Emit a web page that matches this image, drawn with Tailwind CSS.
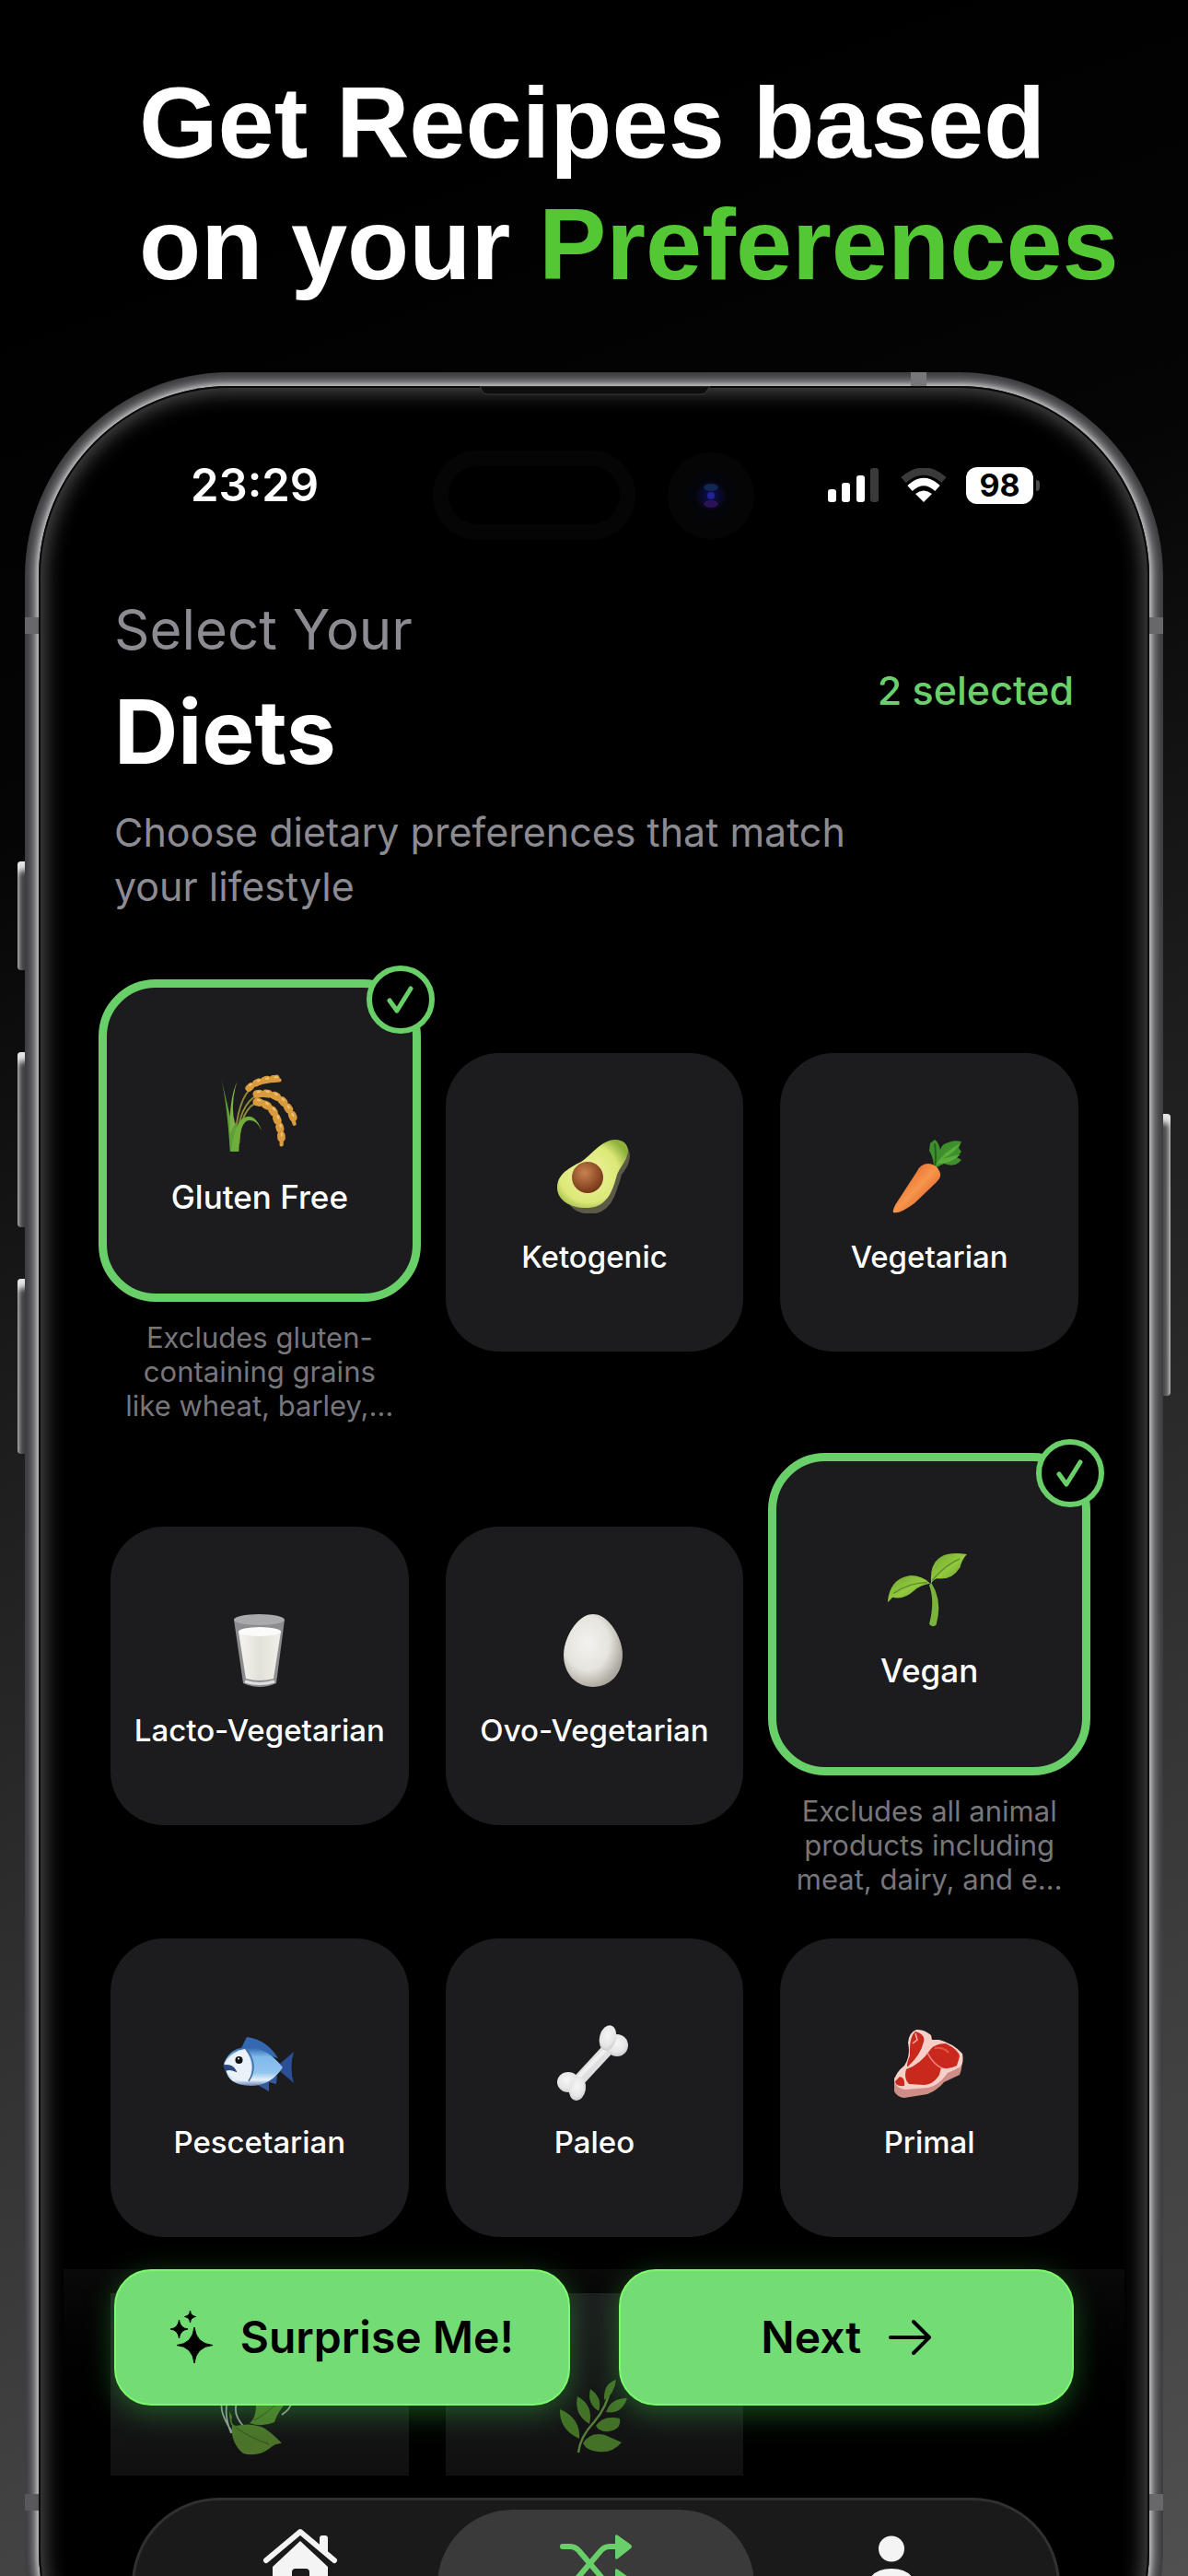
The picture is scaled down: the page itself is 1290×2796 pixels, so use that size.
<!DOCTYPE html>
<html lang="en">
<head>
<meta charset="utf-8">
<meta name="viewport" content="width=device-width, initial-scale=1">
<title>Recipe preferences</title>
<script src="https://cdn.jsdelivr.net/npm/@tailwindcss/browser@4"></script>
</head>
<body class="bg-black">
<div class="h-screen overflow-hidden bg-[linear-gradient(160deg,#000_10%,#050505_28%,#1b1b1b_46%,#2b2b2b_62%,#3e3e3e_80%,#505050_100%)] font-['Inter',sans-serif] text-white">

  <h1 class="pt-[67px] pl-[151px] font-['Liberation_Sans',sans-serif] text-[110px] leading-[132px] font-bold whitespace-nowrap">Get Recipes based<br>on your <span class="text-[#53c834]">Preferences</span></h1>

  <!-- phone -->
  <div class="relative mx-[27px] mt-[73px] h-[2586px]">
    <div class="absolute top-[531px] -left-2 h-[118px] w-2 rounded-l-sm bg-linear-to-r from-[#a0a0a0] via-[#58585a] to-[#303032] shadow-[inset_0_14px_6px_-4px_#e4e4e4]"></div>
    <div class="absolute top-[738px] -left-2 h-[190px] w-2 rounded-l-sm bg-linear-to-r from-[#a0a0a0] via-[#58585a] to-[#303032] shadow-[inset_0_14px_6px_-4px_#e4e4e4]"></div>
    <div class="absolute top-[984px] -left-2 h-[190px] w-2 rounded-l-sm bg-linear-to-r from-[#a0a0a0] via-[#58585a] to-[#303032] shadow-[inset_0_14px_6px_-4px_#e4e4e4]"></div>
    <div class="absolute top-[805px] -right-2 h-[306px] w-2 rounded-r-sm bg-linear-to-l from-[#b0b0b0] via-[#68686a] to-[#3a3a3c] shadow-[inset_0_14px_6px_-4px_#e4e4e4]"></div>

    <div class="relative h-full overflow-hidden rounded-[222px] bg-[#3c3c3f] p-[15px]">
      <div class="relative h-full rounded-[207px] bg-black shadow-[0_0_4px_2px_#c0c0c3,0_0_8px_7px_#88888b,inset_0_0_0_2px_#0a0a0a,inset_0_0_22px_6px_#505050]">
        <svg class="absolute top-0 left-1/2 -ml-[124px] h-2.5 w-[250px]" viewBox="0 0 250 10" aria-hidden="true"><path d="M0 0h250l-4 6q-1 3-5 3H8q-4 0-5-3z" fill="#0e0e0e" stroke="#3a3a3a"/></svg>

        <!-- sensor island -->
        <div class="absolute top-[70px] left-[428px] h-[97px] w-[220px] rounded-full border-[17px] border-[#050505]" aria-hidden="true"></div>
        <svg class="absolute top-[72px] left-[683px] size-[94px]" viewBox="0 0 94 94" aria-hidden="true">
          <defs><radialGradient id="lens" cx=".5" cy=".5" r=".5"><stop offset="0" stop-color="#12124c"/><stop offset=".5" stop-color="#0a0a38"/><stop offset="1" stop-color="#06060f"/></radialGradient></defs>
          <circle cx="47" cy="47" r="47" fill="#050505"/><circle cx="47" cy="47" r="26" fill="#04050a"/><circle cx="47" cy="47" r="16" fill="url(#lens)"/>
          <ellipse cx="47" cy="38" rx="8" ry="4" fill="#173462" opacity=".7"/><ellipse cx="47" cy="56" rx="8" ry="4" fill="#3a1668" opacity=".7"/><circle cx="47" cy="47" r="4" fill="#22229a"/>
        </svg>

        <!-- status bar -->
        <div class="flex items-center justify-between pt-20 pr-[119px] pl-[165px]">
          <div class="text-[49px] leading-[56px] font-semibold">23:29</div>
          <div class="flex items-center">
            <svg class="h-[38px] w-14" viewBox="0 0 56 38" role="img" aria-label="Signal"><g fill="#fff"><rect y="23" width="9" height="14" rx="3"/><rect x="15" y="16" width="9" height="21" rx="3"/><rect x="31" y="8" width="9" height="29" rx="3"/></g><rect x="46" width="9" height="37" rx="3" fill="#3a3a3a"/></svg>
            <svg class="ml-[23px] h-[38px] w-[50px]" viewBox="0 0 50 38" role="img" aria-label="Wi-Fi"><path d="M3 13Q25-6 47 13" fill="none" stroke="#3a3a3a" stroke-width="8"/><path d="M10 22Q25 8 40 22" fill="none" stroke="#fff" stroke-width="8"/><path d="M16 28Q25 21 34 28L25 37Z" fill="#fff"/></svg>
            <div class="ml-[21px] flex h-10 w-[73px] items-center justify-center rounded-xl bg-white text-[34px] leading-10 font-bold text-black">98</div>
            <div class="ml-[3px] h-3 w-1 rounded-r-full bg-[#4a4a4a]"></div>
          </div>
        </div>

        <!-- heading -->
        <header class="px-[82px] pt-[92px]">
          <div class="flex items-center justify-between">
            <h2><span class="block text-[60px] leading-[72px] font-normal text-[#8c8b91]">Select Your</span><span class="mt-[19px] block text-[96px] leading-[112px] font-bold">Diets</span></h2>
            <p class="text-[43px] leading-[52px] font-medium text-[#6bcf6b]">2 selected</p>
          </div>
          <p class="mt-6 max-w-[830px] text-[43px] leading-[59px] text-[#8c8b91]">Choose dietary preferences that match your lifestyle</p>
        </header>

        <!-- diet cards -->
        <main class="mt-[84px] grid grid-cols-3 items-center gap-x-10 gap-y-14 pr-[77px] pl-[78px]">
          <div>
            <button aria-pressed="true" class="relative -m-[13px] flex h-[350px] w-[calc(100%+26px)] flex-col items-center rounded-[62px] border-[9px] border-[#69cf69] bg-[#1c1c1e] pt-[94px]">
              <svg class="size-[86px]" viewBox="0 0 80 80" aria-hidden="true">
                <g fill="none" stroke="#8f8a3a" stroke-width="1.8"><path d="M15 66Q18 24 32 14M17 68Q19 30 38 21M19 70Q20 34 40 27"/></g>
                <path d="M.6 3Q7 28 10 78H18Q23 55 10 42Q5 20 .6 3" fill="#5f9f38"/><path d="M17 8Q9 24 10 60L15 50Q10 30 17 8" fill="#7fb04a"/><path d="M11 78H19Q19 52 27 47Q36 44 42 57Q36 40 26 43Q17 46 13 66" fill="#6fae3c"/>
                <g fill="none" stroke="#d99b3c" stroke-linecap="round"><path d="M29 14Q38 5 58 4" stroke-width="7" stroke-dasharray="3 6"/><path d="M30 13Q40 7 60 6" stroke-width="4"/><path d="M37 20Q54 17 64 28Q72 37 75 47" stroke-width="8" stroke-dasharray="3 6"/><path d="M36 22Q54 18 63 29Q72 38 75 50" stroke-width="4"/><path d="M37 28Q52 30 57 44Q62 56 62 67" stroke-width="8" stroke-dasharray="3 6"/><path d="M37 26Q53 30 58 44Q63 56 62 71" stroke-width="4"/></g>
                <g fill="none" stroke="#efc274" stroke-linecap="round" stroke-width="2" stroke-dasharray="2 7"><path d="M30 11Q40 4 58 3"/><path d="M38 18Q54 15 64 26Q72 36 75 45"/><path d="M38 26Q54 30 58 42Q63 54 62 65"/></g>
              </svg>
              <span class="mt-[26px] text-[35px] leading-[42px] font-medium">Gluten Free</span>
              <span class="absolute -top-6 -right-6 flex size-[74px] items-center justify-center rounded-full border-[6px] border-[#69cf69] bg-black"><svg class="size-8" viewBox="0 0 32 32" aria-hidden="true"><path d="M4 17l8 11L27 4" fill="none" stroke="#69cf69" stroke-width="5" stroke-linecap="round" stroke-linejoin="round"/></svg></span>
            </button>
            <p class="mt-[33px] -mb-2.5 text-center text-[31px] leading-[37px] text-[#77767b]">Excludes gluten-<br>containing grains<br>like wheat, barley,…</p>
          </div>

          <button aria-pressed="false" class="flex h-[324px] flex-col items-center rounded-[58px] bg-[#1c1c1e] pt-[94px]">
            <svg class="size-20" viewBox="0 0 80 80" aria-hidden="true">
              <defs><radialGradient id="avo" cx=".45" cy=".5" r=".6"><stop offset="0" stop-color="#f0f3a0"/><stop offset=".7" stop-color="#dce878"/><stop offset="1" stop-color="#8fb13c"/></radialGradient><radialGradient id="pit" cx=".4" cy=".35" r=".7"><stop offset="0" stop-color="#c98250"/><stop offset="1" stop-color="#703213"/></radialGradient></defs>
              <path d="M64 2Q78 4 79 17Q79 27 70 38Q68 46 62 62Q54 80 36 81Q18 80 12 68z" fill="#5b5a48"/><path d="M63 0C74 0 79 8 76 17C74 25 68 30 65 38C61 52 56 73 34 74C15 75 0 66 0 52C0 38 12 31 26 24C36 18 48 0 63 0z" fill="url(#avo)"/><ellipse cx="33" cy="41" rx="17" ry="17" fill="url(#pit)"/>
            </svg>
            <span class="mt-[27px] text-[33px] leading-10 font-medium">Ketogenic</span>
          </button>

          <button aria-pressed="false" class="flex h-[324px] flex-col items-center rounded-[58px] bg-[#1c1c1e] pt-[94px]">
            <svg class="size-20" viewBox="0 0 80 80" aria-hidden="true">
              <defs><linearGradient id="car" x1="0" y1="0" x2="1" y2="1"><stop offset=".2" stop-color="#e2652c"/><stop offset=".5" stop-color="#f8964c"/><stop offset=".8" stop-color="#dd622b"/></linearGradient></defs>
              <path d="M45 28L48 30L56 26Q66 30 72 25L75 22L70 19L75 13L72 9L75 2Q66 0 61 3Q54 4 52 11Q50 2 46 0L41 4L40 12Q44 18 45 28z" fill="#3f8f2f"/><path d="M47 28Q54 14 74 4Q68 14 54 21Q64 18 74 16Q64 26 50 26z" fill="#59ad38"/><path d="M46 29Q48 20 46 4" stroke="#28601f" stroke-width="2" fill="none"/>
              <path d="M1 79Q0 77 3 71L27 34Q31 26 39 26Q50 27 52 37Q53 41 48 46L24 69Q8 81 1 79z" fill="url(#car)"/>
            </svg>
            <span class="mt-[27px] text-[33px] leading-10 font-medium">Vegetarian</span>
          </button>

          <button aria-pressed="false" class="flex h-[324px] flex-col items-center rounded-[58px] bg-[#1c1c1e] pt-[94px]">
            <svg class="size-20" viewBox="0 0 80 80" aria-hidden="true">
              <defs><linearGradient id="milk"><stop offset="0" stop-color="#f5f5f0"/><stop offset=".5" stop-color="#e2e1d9"/><stop offset="1" stop-color="#f0f0ea"/></linearGradient></defs>
              <path d="M12 7L22 76Q40 84 58 76L67 7z" fill="#8d8d90"/><ellipse cx="39.500" cy="7" rx="27.500" ry="6" fill="#aaaaac"/><path d="M17 20L25 71Q40 75 55 71L63 20z" fill="url(#milk)"/><ellipse cx="40" cy="20" rx="23" ry="5" fill="#fbfbf9"/><path d="M24 74Q40 79 56 74" stroke="#dedee0" stroke-width="3" fill="none"/>
            </svg>
            <span class="mt-[27px] text-[33px] leading-10 font-medium whitespace-nowrap">Lacto-Vegetarian</span>
          </button>

          <button aria-pressed="false" class="flex h-[324px] flex-col items-center rounded-[58px] bg-[#1c1c1e] pt-[94px]">
            <svg class="size-20" viewBox="0 0 80 80" aria-hidden="true">
              <defs><radialGradient id="egg" cx=".4" cy=".4" r=".62"><stop offset="0" stop-color="#f3f2ee"/><stop offset=".6" stop-color="#e6e4de"/><stop offset="1" stop-color="#aca89f"/></radialGradient></defs>
              <path d="M39 1C56 1 71 27 71 45C71 66 57 80 39 80S7 66 7 45C7 27 22 1 39 1z" fill="url(#egg)"/>
            </svg>
            <span class="mt-[27px] text-[33px] leading-10 font-medium whitespace-nowrap">Ovo-Vegetarian</span>
          </button>

          <div>
            <button aria-pressed="true" class="relative -m-[13px] flex h-[350px] w-[calc(100%+26px)] flex-col items-center rounded-[62px] border-[9px] border-[#69cf69] bg-[#1c1c1e] pt-[94px]">
              <svg class="size-[86px] overflow-visible" viewBox="0 0 80 80" aria-hidden="true">
                <defs><linearGradient id="leafa" x1="0" y1="0" x2="1" y2="1"><stop offset="0" stop-color="#6ea52d"/><stop offset=".5" stop-color="#93c83f"/><stop offset="1" stop-color="#5c9426"/></linearGradient></defs>
                <path d="M42 35Q54 54 47 78Q43 81 40 77Q46 54 40 38z" fill="#7cb33a"/><path d="M42 36Q40 16 52 9Q60 4 78 6.500Q73 12 71 20Q63 33 48 31Q44 32 42 36z" fill="url(#leafa)"/><path d="M41 36Q30 38 25 43Q14 53 3 50L-2 55Q0 31 21 28Q33 28 41 36z" fill="url(#leafa)"/>
                <path d="M43 33Q55 18 71 11M38 35Q20 35 4 46" fill="none" stroke="#5a8e28" stroke-width="1.300"/>
              </svg>
              <span class="mt-[26px] text-[35px] leading-[42px] font-medium">Vegan</span>
              <span class="absolute -top-6 -right-6 flex size-[74px] items-center justify-center rounded-full border-[6px] border-[#69cf69] bg-black"><svg class="size-8" viewBox="0 0 32 32" aria-hidden="true"><path d="M4 17l8 11L27 4" fill="none" stroke="#69cf69" stroke-width="5" stroke-linecap="round" stroke-linejoin="round"/></svg></span>
            </button>
            <p class="mt-[33px] -mb-2.5 text-center text-[31px] leading-[37px] text-[#77767b]">Excludes all animal<br>products including<br>meat, dairy, and e…</p>
          </div>

          <button aria-pressed="false" class="flex h-[324px] flex-col items-center rounded-[58px] bg-[#1c1c1e] pt-[94px]">
            <svg class="size-20" viewBox="0 0 80 80" aria-hidden="true">
              <defs><linearGradient id="fish" x2="0" y2="1"><stop offset="0" stop-color="#2f63ad"/><stop offset=".25" stop-color="#7fb9ea"/><stop offset=".65" stop-color="#8fc4ee"/><stop offset=".85" stop-color="#e6f0f8"/><stop offset="1" stop-color="#5f80b4"/></linearGradient></defs>
              <path d="M20 25L26 13Q48 16 60 36z" fill="#3468b0"/><path d="M62 42L77 29Q72 46 77 63L62 50z" fill="#2b4f95"/><path d="M36 64L50 72L50 62L58 64L59 55z" fill="#35599d"/>
              <path d="M1 42Q8 24 26 24Q48 24 65 46Q52 66 30 66Q8 65 4 52z" fill="url(#fish)"/><path d="M2 41Q10 28 24 26Q36 42 28 61Q11 62 4 51z" fill="#eaf1f8"/><path d="M26 27Q39 44 28 61" fill="none" stroke="#47699e" stroke-width="1.500"/><ellipse cx="17.500" cy="38" rx="4" ry="4" fill="#111"/><circle cx="17" cy="36.500" r="1" fill="#fff"/><path d="M1 44Q11 43 14 50Q8 47 3 49z" fill="#2b4680" stroke="#2b4680" stroke-width="1.500"/>
            </svg>
            <span class="mt-[27px] text-[33px] leading-10 font-medium">Pescetarian</span>
          </button>

          <button aria-pressed="false" class="flex h-[324px] flex-col items-center rounded-[58px] bg-[#1c1c1e] pt-[94px]">
            <svg class="size-20 overflow-visible" viewBox="0 0 80 80" aria-hidden="true">
              <defs><radialGradient id="bone" cx=".45" cy=".4" r=".6"><stop offset="0" stop-color="#f6f6f6"/><stop offset=".7" stop-color="#e6e6e6"/><stop offset="1" stop-color="#cfcfcf"/></radialGradient></defs>
              <path d="M57 24L19 65" stroke="#e0e0e0" stroke-width="13"/><path d="M55 24L17 63" stroke="#f0f0f0" stroke-width="4"/>
              <ellipse cx="65" cy="22" rx="12" ry="12" fill="url(#bone)"/><ellipse cx="55" cy="14" rx="9" ry="14" transform="rotate(14 55 14)" fill="url(#bone)"/><ellipse cx="12" cy="62" rx="12" ry="11" fill="url(#bone)"/><ellipse cx="22" cy="69" rx="9" ry="13" transform="rotate(10 22 69)" fill="url(#bone)"/>
            </svg>
            <span class="mt-[27px] text-[33px] leading-10 font-medium">Paleo</span>
          </button>

          <button aria-pressed="false" class="flex h-[324px] flex-col items-center rounded-[58px] bg-[#1c1c1e] pt-[94px]">
            <svg class="size-20" viewBox="0 0 80 80" aria-hidden="true">
              <path d="M2 57V72Q6 79 13 79L38 75Q50 70 56 62L73 54Q76 48 76 32z" fill="#cf8d88"/>
              <path d="M26 5Q34 4 42 11L43 16L51 16Q66 20 76 31Q78 42 73 46L60 52Q50 66 39 68L14 70Q3 68 2 60Q4 51 13 44Q20 34 17 19Q18 8 26 5z" fill="#f6cfc9"/>
              <path d="M25 7Q36 10 34 18Q31 32 17 45Q14 46 19 33Q18 12 25 7zM41 27Q46 20 58 20Q72 27 73 34L70 44Q60 49 53 46L51 54Q45 64 35 65L18 64Q12 58 15 48Q30 43 41 27zM8 56Q14 57 13 66Q3 67 3 61z" fill="#c9281d"/>
              <path d="M38 30Q44 42 54 47" stroke="#e88" stroke-width="1.500" fill="none"/><path d="M46 25Q56 24 61 30" stroke="#e3564a" stroke-width="2" fill="none"/><path d="M25 9l2 7l-5 4" stroke="#f3b3ac" stroke-width="1.500" fill="none"/>
            </svg>
            <span class="mt-[27px] text-[33px] leading-10 font-medium">Primal</span>
          </button>
        </main>

        <!-- next row, running under the action bar -->
        <div class="relative mt-[35px]">
          <div class="mx-[27px] bg-linear-to-b from-[#0a0a0a] to-black pt-[26px] pr-[50px] pl-[51px]">
            <div class="grid grid-cols-3 gap-x-10">
              <div class="flex h-[198px] justify-center overflow-hidden bg-linear-to-b from-[#1d1f20] to-[#101011] pt-[94px]">
                <svg class="size-20 overflow-visible opacity-80" viewBox="0 0 80 80" aria-hidden="true"><path d="M11 58Q-8 30 2 20M9 58Q0 36 6 20M22 50Q8 34 18 20M64 38Q76 30 74 22" fill="none" stroke="#b5bdc2" stroke-width="1.800"/><path d="M29 47Q36 42 36 28Q50 20 68 26Q60 34 56 46Q42 52 29 47z" fill="#5c9030"/><path d="M10 40Q8 48 14 50Q30 46 44 52Q54 58 64 69Q56 69 50 75Q38 84 22 80Q8 68 10 50Q7 46 7 34z" fill="#5a8c30"/><path d="M14 52Q28 62 50 70M34 44Q46 38 58 26" stroke="#456f22" stroke-width="1.500" fill="none"/></svg>
              </div>
              <div class="flex h-[198px] justify-center overflow-hidden bg-linear-to-b from-[#1d1f20] to-[#101011] pt-[94px]">
                <svg class="size-20 opacity-90" viewBox="0 0 80 80" aria-hidden="true"><path d="M23 79Q25 62 40 46Q54 30 58 8" stroke="#5f8a3c" stroke-width="2.500" fill="none"/><g fill="#497c2a"><path d="M64 0Q50 4 51 22Q62 16 64 0z"/><path d="M36 10Q32 26 45 34Q50 20 36 10z"/><path d="M22 18Q18 38 35 48Q40 28 22 18z"/><path d="M3 32Q2 54 24 64Q26 42 3 32z"/><path d="M76 20Q58 20 53 35Q70 38 76 20z"/><path d="M42 50Q50 38 68 42Q70 54 56 56Q46 57 42 50z"/><path d="M28 69Q36 56 52 60L70 68Q60 80 44 78Q32 77 28 69z"/></g></svg>
              </div>
            </div>
          </div>
          <div class="absolute inset-x-[82px] top-0 grid grid-cols-2 gap-[53px]">
            <button class="flex h-[148px] items-center justify-center gap-[30px] rounded-[40px] border-2 border-[#7dfa6c] bg-[#73dc75] text-[48px] leading-[56px] font-semibold whitespace-nowrap text-black shadow-[0_8px_32px_#3dc04466]">
              <svg class="h-[58px] w-[46px]" viewBox="0 0 46 58" aria-hidden="true"><path d="M26 18Q28 36 46 37.500Q28 39 26 57Q24 39 7 37.500Q24 36 26 18zM9.500 10Q10.500 19 19 20Q10.500 21 9.500 30Q8.500 21 0 20Q8.500 19 9.500 10zM21.500 0Q22 5.500 27.500 6.500Q22 7.500 21.500 13Q21 7.500 15.500 6.500Q21 5.500 21.500 0z" stroke="#000" stroke-linejoin="round"/></svg>
              Surprise Me!
            </button>
            <button class="flex h-[148px] items-center justify-center gap-[30px] rounded-[40px] border-2 border-[#7dfa6c] bg-[#73dc75] text-[48px] leading-[56px] font-semibold whitespace-nowrap text-black shadow-[0_8px_32px_#3dc04466]">
              Next
              <svg class="h-10 w-[46px]" viewBox="0 0 46 40" aria-hidden="true"><path d="M2 20H43M27 3L44 20L27 37" fill="none" stroke="#000" stroke-width="4" stroke-linecap="round" stroke-linejoin="round"/></svg>
            </button>
          </div>
        </div>

        <!-- tab bar -->
        <nav class="mt-6 mr-[97px] ml-[101px] grid h-[190px] grid-cols-3 rounded-full border-[3px] border-[#303030] bg-[#1a1a1a] px-5 py-2.5">
          <a href="#home" aria-label="Home" class="flex justify-center pt-5"><svg class="h-[76px] w-[82px]" viewBox="0 0 82 76"><path d="M11 42L41 14L71 42V76H51V48Q51 44 47 44H36Q32 44 32 48V76H11z" fill="#f4f4f4"/><path d="M4 35L41 4L78 35" fill="none" stroke="#1a1a1a" stroke-width="14" stroke-linecap="round" stroke-linejoin="round"/><path d="M62 11q0-3 3-3h3q3 0 3 3v18l-9-8z" fill="#f4f4f4"/><path d="M4 35L41 4L78 35" fill="none" stroke="#f4f4f4" stroke-width="6" stroke-linecap="round" stroke-linejoin="round"/></svg></a>
          <a href="#shuffle" aria-label="Shuffle" aria-current="page" class="-mx-3 flex justify-center rounded-full bg-[#3a3a3a] pt-[27px]"><svg class="h-16 w-20" viewBox="0 0 80 64"><g fill="none" stroke="#69cf69" stroke-width="6" stroke-linecap="round"><path d="M4 13H12Q18 13 22 18L45 45Q49 50 55 50H62"/><path d="M4 50H12Q18 50 22 45L45 18Q49 13 55 13H62"/></g><path d="M61 2Q61-1 64 1L78 11Q80 13 78 15L64 26Q61 28 61 25zM61 39Q61 36 64 38L78 48Q80 50 78 52L64 63Q61 65 61 62z" fill="#69cf69"/></svg></a>
          <a href="#profile" aria-label="Profile" class="flex justify-center pt-7"><svg class="h-[70px] w-16" viewBox="0 0 64 70" fill="#f4f4f4"><circle cx="32" cy="14.500" r="14"/><path d="M4 66Q4 36 32 36T60 66z"/></svg></a>
        </nav>
      </div>
      <!-- antenna bands -->
      <div class="absolute top-0 right-[257px] h-[15px] w-[17px] bg-[#77777a]"></div>
      <div class="absolute top-[266px] left-0 h-[18px] w-[15px] bg-[#68686b]"></div>
      <div class="absolute top-[266px] right-0 h-[18px] w-[15px] bg-[#68686b]"></div>
      <div class="absolute top-[2303px] left-0 h-[18px] w-[15px] bg-[#59595b]"></div>
      <div class="absolute top-[2303px] right-0 h-[18px] w-[15px] bg-[#68686b]"></div>
    </div>
  </div>
</div>
</body>
</html>
